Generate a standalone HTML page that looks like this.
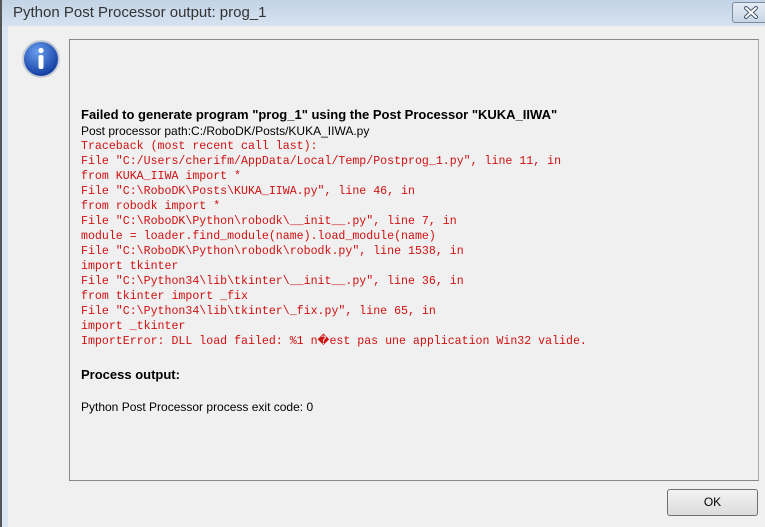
<!DOCTYPE html><html><head><style>
body{margin:0;width:765px;height:527px;overflow:hidden;background:#f0f0f0;font-family:"Liberation Sans",sans-serif;position:relative}
.title{position:absolute;left:0;top:0;width:765px;height:26px;background:linear-gradient(#c3d4e6,#d5e2f0)}
.title span{position:absolute;left:13px;top:4px;font-size:15px;color:#333}
.lb{position:absolute;left:0;top:0;width:2px;height:527px;background:#555}
.lb2{position:absolute;left:2px;top:26px;width:6px;height:501px;background:#dbe6f3}
.x{position:absolute;left:732px;top:2px;width:36px;height:19px;border:1px solid #7c8aa0;border-radius:3px;background:linear-gradient(#e4ecf5,#c9d6e6)}
.box{position:absolute;left:69px;top:39px;width:688px;height:440px;border:1px solid #888;border-right-color:#aaa}
.t{position:absolute;left:81px;top:107px;font-size:12px;line-height:15px;color:#000;white-space:pre}
.t div{height:15px;line-height:15px}
.t div.s{height:18px}
.m{font-family:"Liberation Mono",monospace;font-size:11.6px;color:#d01010}
.b{font-weight:bold;font-size:13px}
.ok{position:absolute;left:667px;top:489px;width:89px;height:25px;border:1px solid #707070;border-radius:3px;background:linear-gradient(#f2f2f2,#dcdcdc);font-size:12px;text-align:center;line-height:25px}
</style></head><body>
<div class="title"><span>Python Post Processor output: prog_1</span></div>
<div class="lb"></div><div class="lb2"></div>
<div class="x"><svg width="36" height="19"><path d="M13 5 L23 14 M23 5 L13 14" stroke="#4a5a70" stroke-width="4" stroke-linecap="round"/><path d="M13 5 L23 14 M23 5 L13 14" stroke="#fff" stroke-width="2" stroke-linecap="round"/></svg></div>
<svg style="position:absolute;left:21px;top:39px" width="40" height="40"><defs><radialGradient id="g" cx="0.4" cy="0.3" r="0.7"><stop offset="0" stop-color="#6a9ef0"/><stop offset="1" stop-color="#0f3aa0"/></radialGradient></defs><circle cx="20" cy="20" r="18" fill="url(#g)" stroke="#c8ccd4" stroke-width="2"/><circle cx="20" cy="11.5" r="2.6" fill="#fff"/><rect x="17.5" y="16" width="5" height="14" rx="2" fill="#fff"/></svg>
<div class="box"></div>
<div class="t"><div class="b" style="height:17px">Failed to generate program "prog_1" using the Post Processor "KUKA_IIWA"</div><div>Post processor path:C:/RoboDK/Posts/KUKA_IIWA.py</div><div class="m">Traceback (most recent call last):</div><div class="m">File "C:/Users/cherifm/AppData/Local/Temp/Postprog_1.py", line 11, in</div><div class="m">from KUKA_IIWA import *</div><div class="m">File "C:\RoboDK\Posts\KUKA_IIWA.py", line 46, in</div><div class="m">from robodk import *</div><div class="m">File "C:\RoboDK\Python\robodk\__init__.py", line 7, in</div><div class="m">module = loader.find_module(name).load_module(name)</div><div class="m">File "C:\RoboDK\Python\robodk\robodk.py", line 1538, in</div><div class="m">import tkinter</div><div class="m">File "C:\Python34\lib\tkinter\__init__.py", line 36, in</div><div class="m">from tkinter import _fix</div><div class="m">File "C:\Python34\lib\tkinter\_fix.py", line 65, in</div><div class="m">import _tkinter</div><div class="m">ImportError: DLL load failed: %1 n�est pas une application Win32 valide.</div><div class="s"></div><div class="b">Process output:</div><div class="s"></div><div>Python Post Processor process exit code: 0</div></div>
<div class="ok">OK</div>
</body></html>
